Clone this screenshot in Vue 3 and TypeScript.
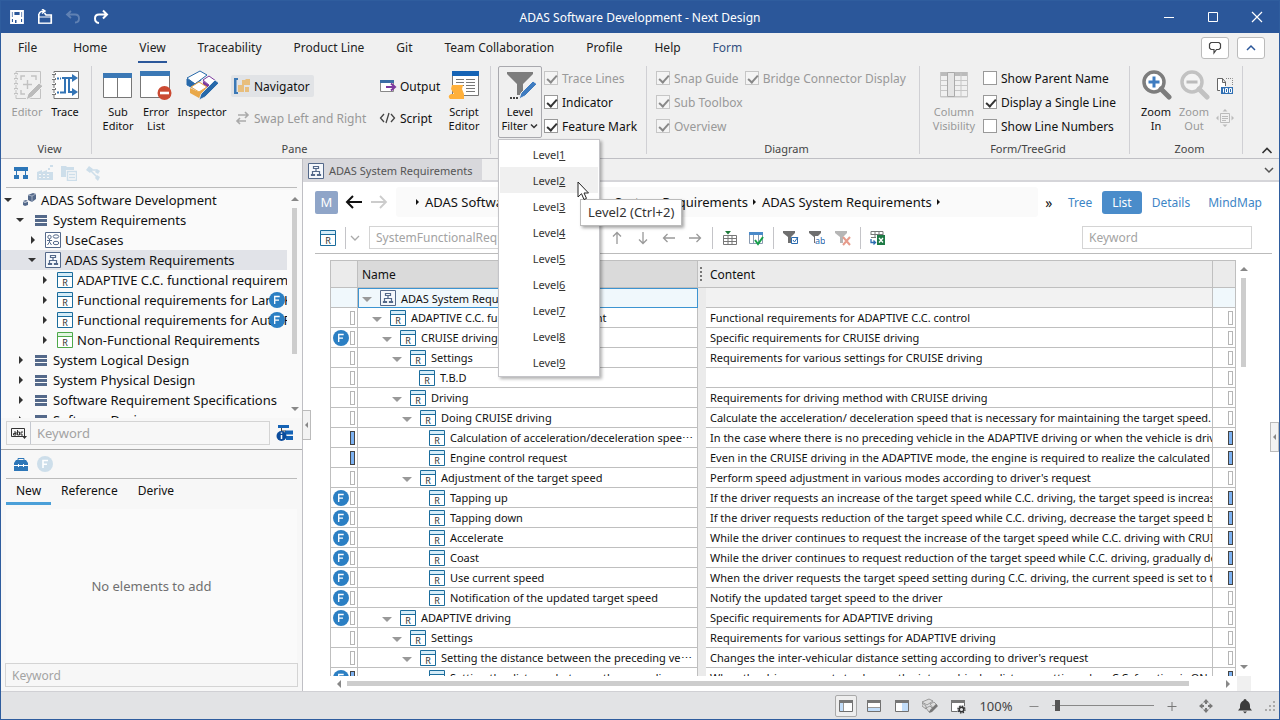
<script setup lang="ts">
import { ref } from 'vue'

interface TreeNode {
  label: string
  level: number
  icon: string
  open: boolean
  selected?: boolean
  feature?: boolean
}

interface GridRow {
  name: string
  content: string
  level: number
  expandable?: boolean
  feature?: boolean
  left?: 'off' | 'on'
  right?: 'off' | 'on'
}

const tabs = ['File', 'Home', 'View', 'Traceability', 'Product Line', 'Git', 'Team Collaboration', 'Profile', 'Help', 'Form']
const levels = [1, 2, 3, 4, 5, 6, 7, 8, 9]
const zoom = ref(3)

const tree: TreeNode[] = [
  { label: 'ADAS Software Development', level: 0, icon: 'project', open: true },
  { label: 'System Requirements', level: 1, icon: 'pkg', open: true },
  { label: 'UseCases', level: 2, icon: 'usecase', open: false },
  { label: 'ADAS System Requirements', level: 2, icon: 'struct', open: true, selected: true },
  { label: 'ADAPTIVE C.C. functional requirement', level: 3, icon: 'req', open: false },
  { label: 'Functional requirements for Lane Keep', level: 3, icon: 'req', open: false, feature: true },
  { label: 'Functional requirements for Auto Parking', level: 3, icon: 'req', open: false, feature: true },
  { label: 'Non-Functional Requirements', level: 3, icon: 'reqgreen', open: false },
  { label: 'System Logical Design', level: 1, icon: 'pkg', open: false },
  { label: 'System Physical Design', level: 1, icon: 'pkg', open: false },
  { label: 'Software Requirement Specifications', level: 1, icon: 'pkg', open: false },
  { label: 'Software Design', level: 1, icon: 'pkg', open: false },
]

const rows: GridRow[] = [
  { name: 'ADAPTIVE C.C. functional requirement', content: 'Functional requirements for ADAPTIVE C.C. control', level: 1, expandable: true },
  { name: 'CRUISE driving', content: 'Specific requirements for CRUISE driving', level: 2, expandable: true, feature: true },
  { name: 'Settings', content: 'Requirements for various settings for CRUISE driving', level: 3, expandable: true },
  { name: 'T.B.D', content: '', level: 5 },
  { name: 'Driving', content: 'Requirements for driving method with CRUISE driving', level: 3, expandable: true },
  { name: 'Doing CRUISE driving', content: 'Calculate the acceleration/ deceleration speed that is necessary for maintaining the target speed.', level: 4, expandable: true },
  { name: 'Calculation of acceleration/deceleration spee⋯', content: 'In the case where there is no preceding vehicle in the ADAPTIVE driving or when the vehicle is driving', level: 6, left: 'on', right: 'on' },
  { name: 'Engine control request', content: 'Even in the CRUISE driving in the ADAPTIVE mode, the engine is required to realize the calculated speed', level: 6, left: 'on', right: 'on' },
  { name: 'Adjustment of the target speed', content: "Perform speed adjustment in various modes according to driver's request", level: 4, expandable: true },
  { name: 'Tapping up', content: 'If the driver requests an increase of the target speed while C.C. driving, the target speed is increased', level: 6, feature: true, right: 'on' },
  { name: 'Tapping down', content: 'If the driver requests reduction of the target speed while C.C. driving, decrease the target speed by', level: 6, feature: true, right: 'on' },
  { name: 'Accelerate', content: 'While the driver continues to request the increase of the target speed while C.C. driving with CRUISE', level: 6, feature: true, right: 'on' },
  { name: 'Coast', content: 'While the driver continues to request reduction of the target speed while C.C. driving, gradually decrease', level: 6, feature: true, right: 'on' },
  { name: 'Use current speed', content: 'When the driver requests the target speed setting during C.C. driving, the current speed is set to the', level: 6, feature: true, right: 'on' },
  { name: 'Notification of the updated target speed', content: 'Notify the updated target speed to the driver', level: 6, feature: true },
  { name: 'ADAPTIVE driving', content: 'Specific requirements for ADAPTIVE driving', level: 2, expandable: true, feature: true },
  { name: 'Settings', content: 'Requirements for various settings for ADAPTIVE driving', level: 3, expandable: true },
  { name: 'Setting the distance between the preceding ve⋯', content: "Changes the inter-vehicular distance setting according to driver's request", level: 4, expandable: true },
  { name: 'Setting the distance between the preceding ve⋯', content: 'When the driver requests to change the inter-vehicular distance setting when C.C. function is ON', level: 6, feature: true, left: 'on', right: 'on' },
]

// Leaf rows have no expander, so their icon starts one slot further in.
const indent = (row: GridRow) => (row.expandable ? row.level : row.level - 1) * 10 + (row.expandable ? 4 : 21)
</script>

<template>
  <div class="app">
    <svg class="sprite" aria-hidden="true">
      <symbol id="req" viewBox="0 0 16 16"><path d="M.5.5h15v15H.5z" fill="#fff" stroke="#1a6c9c" /><path d="M1 1h14v3H1z" fill="#d5ecf8" /><path d="M1 4.500h14" stroke="#1a6c9c" /><text x="8" y="14" text-anchor="middle" font-size="9" font-family="Noto Sans, sans-serif" fill="#333">R</text></symbol>
      <symbol id="reqgreen" viewBox="0 0 16 16"><path d="M.5.5h15v15H.5z" fill="#fff" stroke="#4da84a" /><path d="M1 1h14v3H1z" fill="#e2f6e0" /><path d="M1 4.500h14" stroke="#4da84a" /><text x="8" y="14" text-anchor="middle" font-size="9" font-family="Noto Sans, sans-serif" fill="#333">R</text></symbol>
      <symbol id="struct" viewBox="0 0 16 16"><path d="M.5.5h15v15H.5z" fill="#f5f8fc" stroke="#54698a" /><path d="M5.500 3.500h5v2h-5zM3.500 11.500h3v1h-3zM9.500 11.500h3v1h-3zM8 6v2M4.500 11V8.500h7V11" fill="none" stroke="#54698a" stroke-width="1.200" /></symbol>
      <symbol id="usecase" viewBox="0 0 16 16"><path d="M.5.5h15v15H.5z" fill="#fff" stroke="#54698a" /><g fill="none" stroke="#54698a"><circle cx="4.500" cy="5" r="1.700" /><path d="M4.500 7v3M2 8.500h5M2.500 13l2-3 2 3" /><ellipse cx="11" cy="4.500" rx="2.800" ry="1.700" /><ellipse cx="11" cy="11" rx="2.800" ry="1.700" /></g></symbol>
      <symbol id="pkg" viewBox="0 0 16 16"><path d="M2 3h12v3H2zM2 7h12v3H2zM2 11h12v3H2z" fill="#54698a" /></symbol>
      <symbol id="project" viewBox="0 0 16 16"><path d="M7 3l5-2 3 1v5l-4 3-4-2z" fill="#54698a" /><path d="M7 3l4 1 4-2M11 4v6" stroke="#b6c0d0" fill="none" stroke-width=".8" /><path d="M2 9l3-1 2 1v4l-3 1-2-1z" fill="#54698a" /><path d="M2 9.500l2 .8 3-1" stroke="#dce2ea" fill="none" /></symbol>
      <symbol id="feat" viewBox="0 0 16 16"><circle cx="8" cy="8" r="8" fill="#2b7fc3" /><path d="M5.700 12V4.500h5M5.700 8.200h4.300" fill="none" stroke="#fff" stroke-width="1.300" /></symbol>
      <symbol id="panelwin" viewBox="0 0 16 16"><path d="M1.500 2.500h13v11h-13z" fill="#fff" stroke="#707070" /><path d="M1 2h14v3H1z" fill="#777" /></symbol>
      <symbol id="funnel" viewBox="0 0 16 16"><path d="M0 1h12v2L8 7v6H5V7L0 3z" fill="#6f6f6f" /></symbol>
    </svg>

    <header class="title">
      <div class="quick">
        <button aria-label="Save"><svg viewBox="0 0 16 16"><path d="M2 2h12v12H2zM2 9h12M4.500 2v5h7V2" fill="none" stroke="#fff" stroke-width="1.800" /><path d="M4 10h8v4H4z" fill="#fff" /><path d="M6 11h1.500v3H6z" fill="#2b579a" /></svg></button>
        <button aria-label="Open"><svg viewBox="0 0 16 16"><path d="M1.800 5v9h12.500V6H9L7.500 4" fill="none" stroke="#fff" stroke-width="1.600" /><path d="M2 8h12v6H2z" fill="#2b579a" stroke="#fff" stroke-width="1.200" /><path d="M2 5q1-3 5-3M5 0l3 2-3 2.500" stroke="#fff" stroke-width="1.500" fill="none" /></svg></button>
        <button aria-label="Undo" class="undo"><svg viewBox="0 0 16 16"><path d="M6 2L2 5.500 6 9M2 5.500h8q4 0 4 4t-4 4" fill="none" stroke="#fff" stroke-width="1.800" /></svg></button>
        <button aria-label="Redo"><svg viewBox="0 0 16 16"><path d="M10 1.500L14 5.500 10 9.500M14 5.500H6q-4 0-4 4t4 4.500" fill="none" stroke="#fff" stroke-width="2" /></svg></button>
      </div>
      <h1>ADAS Software Development - Next Design</h1>
      <div class="winbtns">
        <button aria-label="Minimize"><svg viewBox="0 0 12 12"><path d="M1 6.500h10" stroke="#fff" /></svg></button>
        <button aria-label="Maximize"><svg viewBox="0 0 12 12"><path d="M1.500 1.500h9v9h-9z" fill="none" stroke="#fff" /></svg></button>
        <button aria-label="Close"><svg viewBox="0 0 12 12"><path d="M1 1l10 10M11 1L1 11" stroke="#fff" stroke-width="1.200" /></svg></button>
      </div>
    </header>

    <nav class="tabs">
      <button v-for="t in tabs" :key="t" :class="{ file: t === 'File', active: t === 'View', context: t === 'Form' }">{{ t }}</button>
      <div class="tabtools">
        <button aria-label="Feedback"><svg viewBox="0 0 14 14"><path d="M3 1.500h8l1.500 1.500v4L11 8.500H8.500L6 12V8.500H3L1.500 7V3z" fill="#fff" stroke="#444" stroke-width="1.200" /></svg></button>
        <button aria-label="Collapse"><svg viewBox="0 0 14 14"><path d="M3 9l4-4 4 4" fill="none" stroke="#2b579a" stroke-width="1.500" /></svg></button>
      </div>
    </nav>

    <section class="ribbon">
      <div class="group g-view">
        <div class="items">
          <button class="big dim w38"><svg viewBox="0 0 32 32"><g fill="none" stroke="#c2c2c2"><path d="M5 3.500h24.500v27H5V3.500" /><path d="M5 5v25" stroke-dasharray="2 3" stroke-width="4" /><path d="M5 6v24" stroke="#f0f0f0" stroke-dasharray="1 4" stroke-width="3" /><path d="M10 12V8h4M20 8h5v4M10 22v4h4M12 16.500h9M16.500 12v9" stroke-width="1.400" /></g><path d="M15 32l2-6L28 15l4 3-11 11z" fill="#bbb" stroke="#f0f0f0" /></svg><span>Editor</span></button>
          <button class="big w38"><svg viewBox="0 0 32 32"><path d="M5 3.500h24.500v27H5z" fill="#fff" stroke="#777" /><path d="M5 5v25" stroke="#777" stroke-dasharray="2 3" stroke-width="4" /><path d="M4.500 5v25" stroke="#fff" stroke-dasharray="1 4" stroke-width="3" /><path d="M8 10.500h4M8 24.500h4" stroke="#3374b5" stroke-width="2" stroke-dasharray="2 1" /><path d="M12 24.500h4V10h11M13 10h7v14h7" fill="none" stroke="#3374b5" stroke-width="2" /><path d="M23 6l6 4-6 4zM23 20l6 4-6 4z" fill="#3374b5" /></svg><span>Trace</span></button>
        </div>
        <p>View</p>
      </div>

      <div class="group g-pane">
        <div class="items">
          <button class="big w38"><svg viewBox="0 0 32 32"><path d="M1.500 5.500h28v24h-28zM15.500 8v21" fill="#fff" stroke="#777" /><path d="M1 5h29v5H1z" fill="#3b78b5" /></svg><span>Sub<br>Editor</span></button>
          <button class="big w38"><svg viewBox="0 0 32 32"><path d="M.5 3.500h29v26H.5z" fill="#fff" stroke="#777" /><path d="M0 3h30v5H0z" fill="#3b78b5" /><circle cx="24.500" cy="25" r="7" fill="#cb4a32" /><path d="M20 25h9" stroke="#fff" stroke-width="2.600" /></svg><span>Error<br>List</span></button>
          <button class="big w54"><svg viewBox="0 0 32 32"><path d="M1 10L14 3l7 4-12 9z" fill="#fff" stroke="#2769aa" /><path d="M1 11v6l8 4v-5zM9 16l6-4" fill="#2769aa" stroke="#2769aa" /><path d="M17 12l6-4 7 5-6 5z" fill="#fff" stroke="#7c3a9e" /><path d="M17 13v5l6 4v-5z" fill="#7c3a9e" /><path d="M5 19l8-5 8 5-8 5z" fill="#fff" stroke="#e9a849" /><path d="M4 20v5l9 5v-6zM13 24l7-4v6l-7 4z" fill="#e9a849" /><path d="M13 32l2-6L29 12l4 3-14 14z" fill="#2769aa" stroke="#f0f0f0" stroke-width=".8" /></svg><span>Inspector</span></button>
          <div class="stack s-nav">
            <button class="line on"><svg viewBox="0 0 18 16"><path d="M1 0h4v2H3.500v12H5v2H1z" fill="#3b78b5" /><path d="M9 2h3l1-1h4v6H9zM5 7h4l1-1h1v8H5zM12 9h4v5h-4z" fill="#e8be7c" /></svg>Navigator</button>
            <button class="line dim"><svg viewBox="0 0 18 16"><path d="M5 5h10M12 2l3 3-3 3M13 11H4M7 8l-3 3 3 3" fill="none" stroke="#aaa" stroke-width="1.600" /></svg>Swap Left and Right</button>
          </div>
          <div class="stack s-out">
            <button class="line"><svg viewBox="0 0 18 16"><path d="M1.500 2.500h13v11h-13z" fill="#fff" stroke="#888" /><path d="M1 2h14v3H1z" fill="#3b6ea5" /><path d="M7 9h8M12 5.500l4 3.500-4 3.500" fill="none" stroke="#7c3a9e" stroke-width="2" /></svg>Output</button>
            <button class="line"><svg viewBox="0 0 18 16"><path d="M5 4L1.500 8 5 12M12 4l3.500 4L12 12M10 3L7 13" fill="none" stroke="#444" stroke-width="1.300" /></svg>Script</button>
          </div>
          <button class="big w38"><svg viewBox="0 0 32 32"><path d="M4.500 3.500h26v24h-26z" fill="#fff" stroke="#777" /><path d="M4 3h27v5H4z" fill="#1563b5" /><path d="M8 11.500h8M18 11.500h9M8 14.500h8M18 14.500h9M8 17.500h8M18 17.500h9M18 20.500h9M18 23.500h9" stroke="#777" /><path d="M4 17h11l-1 4 2 5v5H2q-3-3 1-5h3l-3-5z" fill="#ffb03b" /></svg><span>Script<br>Editor</span></button>
        </div>
        <p>Pane</p>
      </div>

      <div class="group g-filter">
        <div class="items">
          <div class="dropwrap">
            <button class="big filter"><svg viewBox="0 0 32 32"><path d="M3 4h26v2L19 16v11h-6V16L3 6z" fill="#7d7d7d" /><path d="M15 31l2-6L29 13l4 3-12 12z" fill="#3f7cc0" stroke="#f0f0f0" /><path d="M6 30h9" stroke="#444" stroke-width="2" stroke-dasharray="2 1" /></svg><span>Level<br>Filter <svg class="chev" viewBox="0 0 8 8"><path d="M1 2.500l3 3 3-3" fill="none" stroke="#333" stroke-width="1.500" /></svg></span></button>
            <div class="menu" role="menu">
              <button v-for="n in levels" :key="n" role="menuitem" :class="{ hover: n === 2 }">Level<u>{{ n }}</u></button>
              <svg class="cursor" viewBox="0 0 12 20"><path d="M1 1v15l3.500-3.300L7 18.500l2.500-1.100L7 12h4.500z" fill="#fff" stroke="#222" /></svg>
              <div class="tip" role="tooltip">Level2 (Ctrl+2)</div>
            </div>
          </div>
          <div class="checks">
            <label class="dim"><input type="checkbox" checked disabled>Trace Lines</label>
            <label><input type="checkbox" checked>Indicator</label>
            <label><input type="checkbox" checked>Feature Mark</label>
          </div>
        </div>
      </div>

      <div class="group g-diagram">
        <div class="items">
          <div class="checks">
            <div class="pair">
              <label class="dim"><input type="checkbox" checked disabled>Snap Guide</label>
              <label class="dim"><input type="checkbox" checked disabled>Bridge Connector Display</label>
            </div>
            <label class="dim"><input type="checkbox" checked disabled>Sub Toolbox</label>
            <label class="dim"><input type="checkbox" checked disabled>Overview</label>
          </div>
        </div>
        <p>Diagram</p>
      </div>

      <div class="group g-form">
        <div class="items">
          <button class="big dim w54"><svg viewBox="0 0 32 32"><path d="M2 4h28v4H2z" fill="#bbb" /><path d="M2.500 4v25h27V4M16 5v24M23 5v24M2 12.500h28M2 17.500h28M2 22.500h28M2 28.500h28" fill="none" stroke="#c6c6c6" /><path d="M9.500 4.500h7v24h-7z" fill="#e4e4e4" stroke="#aaa" /></svg><span>Column<br>Visibility</span></button>
          <div class="checks">
            <label><input type="checkbox">Show Parent Name</label>
            <label><input type="checkbox" checked>Display a Single Line</label>
            <label><input type="checkbox">Show Line Numbers</label>
          </div>
        </div>
        <p>Form/TreeGrid</p>
      </div>

      <div class="group g-zoom">
        <div class="items">
          <button class="big w38"><svg viewBox="0 0 32 32"><circle cx="14" cy="14" r="10" fill="#fff" stroke="#7d7d7d" stroke-width="3.500" /><path d="M21 21l8 8" stroke="#7d7d7d" stroke-width="5" stroke-linecap="round" /><path d="M8.500 14h11M14 8.500v11" stroke="#3f7cc0" stroke-width="3" /></svg><span>Zoom<br>In</span></button>
          <button class="big dim w38"><svg viewBox="0 0 32 32"><circle cx="14" cy="14" r="10" fill="#f4f4f4" stroke="#c2c2c2" stroke-width="3.500" /><path d="M21 21l8 8" stroke="#c2c2c2" stroke-width="5" stroke-linecap="round" /><path d="M8.500 14h11" stroke="#bbb" stroke-width="3" /></svg><span>Zoom<br>Out</span></button>
          <div class="stack s-zoom">
            <button aria-label="Zoom 100%"><svg viewBox="0 0 18 18"><path d="M4 13.500H1.500v-12h5L9.500 5v4M6.500 1.500v4h3" fill="#fff" stroke="#666" /><path d="M10 1.500h6.500V9" fill="none" stroke="#888" stroke-dasharray="1 1" /><path d="M5 10h12v7H5z" fill="#2f6fb3" /><path d="M7.500 11.500v4M9.500 11.500h2v4h-2zM13.500 11.500h2v4h-2z" fill="none" stroke="#fff" /></svg></button>
            <button aria-label="Fit"><svg viewBox="0 0 18 18"><path d="M4.500 4.500h9v9h-9zM6 7.500h6M6 9.500h6M6 11.500h4" fill="none" stroke="#bbb" /><path d="M9 0l2.500 2.500h-5zM9 18l2.500-2.500h-5zM0 9l2.500-2.500v5zM18 9l-2.500-2.500v5z" fill="#bbb" /></svg></button>
          </div>
        </div>
        <p>Zoom</p>
      </div>
      <button class="fold" aria-label="Collapse ribbon"><svg viewBox="0 0 12 12"><path d="M1.500 8L6 3.500 10.500 8" fill="none" stroke="#333" stroke-width="1.600" /></svg></button>
    </section>

    <div class="body">
      <aside class="side">
        <section class="navpane">
          <div class="sidetools">
            <button aria-label="Model"><svg viewBox="0 0 16 16"><path d="M1 2h14v4H1zM1 10h5v4H1zM10 10h5v4h-5z" fill="#2c76b8" /><path d="M3.500 6v4M12.500 6v4" stroke="#2c76b8" /></svg></button>
            <button aria-label="Product line"><svg viewBox="0 0 16 16"><path d="M0 15V7l5-2v2l5-2v2h6v8zM11 5V3h2v2zM13 2h3V0h-3z" fill="#cddeea" /><path d="M2 9.500h2M6 9.500h2M10 9.500h2M2 12.500h2M6 12.500h2M10 12.500h2" stroke="#f7f7f7" /></svg></button>
            <button aria-label="Documents"><svg viewBox="0 0 16 16"><path d="M0 1h5l1 1h7v3H5v7H0z" fill="#cddeea" /><path d="M6.500 6.500h9v9h-9zM8 9.500h6M8 12.500h6" fill="#f7f7f7" stroke="#cddeea" stroke-width="1.500" /></svg></button>
            <button aria-label="Relations"><svg viewBox="0 0 16 16"><path d="M4 1l4 3-3 4-4-3zM12 4l3 2-2 3-3-2zM12 10l3 2-2 4-3-3z" fill="#cddeea" /><path d="M6 5h6M6 6l6 6" stroke="#cddeea" stroke-width="1.500" /></svg></button>
          </div>
          <div class="treebox">
            <ul class="tree" role="tree">
              <li v-for="n in tree" :key="n.label" role="treeitem" :class="['lv' + n.level, { selected: n.selected }]">
                <i :class="n.open ? 'tri-down' : 'tri-right'"></i>
                <svg class="i16"><use :href="'#' + n.icon" /></svg>
                <span>{{ n.label }}</span>
                <svg v-if="n.feature" class="i16 badge"><use href="#feat" /></svg>
              </li>
            </ul>
            <div class="vbar"><i class="arr up"></i><b></b><i class="arr down"></i></div>
          </div>
          <div class="search">
            <div class="field">
              <button aria-label="Match mode"><svg viewBox="0 0 18 14"><path d="M1.500 2.500h13v8h-13z" fill="none" stroke="#333" /><path d="M4 6h2v3H3.500V7.500H6M7.500 4v5h2V6h-2M13 6h-2v3h2" fill="none" stroke="#333" /><path d="M12 10h5l-2.500 3z" fill="#333" /></svg></button>
              <input type="text" placeholder="Keyword" aria-label="Navigator keyword">
            </div>
            <button aria-label="Show details" class="info"><svg viewBox="0 0 18 18"><path d="M2 1h11v3H2zM9 6.500h8v4H9zM10 12h7v4h-7z" fill="#1563b5" /><path d="M5.500 4v3h4" fill="none" stroke="#444" /><circle cx="5.500" cy="12" r="5" fill="#0b4c9c" /><path d="M5.500 11v4M5.500 8.500v1.300" stroke="#fff" stroke-width="1.500" /></svg></button>
          </div>
        </section>

        <section class="toolbox">
          <div class="sidetools">
            <button aria-label="Toolbox"><svg viewBox="0 0 16 16"><path d="M1 7l2-3h10l2 3v8H1z" fill="#2c76b8" /><path d="M5 4V2.500h6V4" fill="none" stroke="#2c76b8" /><path d="M1 9.500h14M5.500 8v3M10.500 8v3" stroke="#fff" /></svg></button>
            <button aria-label="Features"><svg viewBox="0 0 16 16"><circle cx="8" cy="8" r="8" fill="#cddeea" /><path d="M6 12V4.500h5M6 8.200h4" fill="none" stroke="#fff" stroke-width="1.600" /></svg></button>
          </div>
          <div class="boxtabs">
            <button class="active">New</button><button>Reference</button><button>Derive</button>
          </div>
          <div class="empty">No elements to add</div>
          <input type="text" placeholder="Keyword" aria-label="Toolbox keyword">
        </section>
        <button class="handle hl" aria-label="Collapse navigator"></button>
      </aside>

      <main class="main">
        <div class="doctabs">
          <button><svg class="i16"><use href="#struct" /></svg>ADAS System Requirements</button>
          <svg class="more" viewBox="0 0 12 12"><path d="M2 4l4 4 4-4" fill="none" stroke="#555" stroke-width="1.500" /></svg>
        </div>

        <div class="crumbrow">
          <span class="model">M</span>
          <button class="hist" aria-label="Back"><svg viewBox="0 0 18 16"><path d="M17 8H2M8 2L2 8l6 6" fill="none" stroke="#111" stroke-width="2" /></svg></button>
          <button class="hist" aria-label="Forward"><svg viewBox="0 0 18 16"><path d="M1 8h14M10 2l6 6-6 6" fill="none" stroke="#ccc" stroke-width="1.800" /></svg></button>
          <div class="crumbs">
            <i></i><a href="#">ADAS Software Development</a><i></i><a href="#">System Requirements</a><i></i><a href="#">ADAS System Requirements</a><i></i>
          </div>
          <button class="overflow">»</button>
          <div class="views">
            <button>Tree</button><button class="active">List</button><button>Details</button><button>MindMap</button>
          </div>
        </div>

        <div class="toolrow">
          <svg class="i16 kind"><use href="#req" /></svg>
          <hr>
          <svg class="drop" viewBox="0 0 10 10"><path d="M1 3l4 4 4-4" fill="none" stroke="#aaa" stroke-width="1.300" /></svg>
          <input class="type" type="text" placeholder="SystemFunctionalRequirement" aria-label="Element type">
          <button aria-label="Up"><svg viewBox="0 0 16 16"><path d="M8 14V3M4 6.500L8 2.500l4 4" fill="none" stroke="#999" stroke-width="1.300" /></svg></button>
          <button aria-label="Down"><svg viewBox="0 0 16 16"><path d="M8 2v11M4 9.500l4 4 4-4" fill="none" stroke="#999" stroke-width="1.300" /></svg></button>
          <button aria-label="Left"><svg viewBox="0 0 16 16"><path d="M14 8H3M6.500 4l-4 4 4 4" fill="none" stroke="#999" stroke-width="1.300" /></svg></button>
          <button aria-label="Right"><svg viewBox="0 0 16 16"><path d="M2 8h11M9.500 4l4 4-4 4" fill="none" stroke="#999" stroke-width="1.300" /></svg></button>
          <hr>
          <button aria-label="Insert column"><svg viewBox="0 0 16 16"><path d="M1.500 5.500h13v9h-13zM1 8.500h14M1 11.500h14M6 6v9M10 6v9" fill="none" stroke="#777" /><path d="M3 1h6L6 4.500z" fill="#1e7a3a" /></svg></button>
          <button aria-label="Column settings"><svg viewBox="0 0 16 16"><path d="M1.500 2.500h13v11h-13zM5.500 5v9M10.500 5v9" fill="#fff" stroke="#8a9bb0" /><path d="M1 2h14v3H1z" fill="#4a8ac9" /><path d="M7 10l3 4 5-7" fill="none" stroke="#17a04a" stroke-width="2" /></svg></button>
          <hr>
          <button aria-label="Filter by check"><svg viewBox="0 0 16 16"><use href="#funnel" /><path d="M8.500 7.500h6v6h-6z" fill="#fff" stroke="#2b6cb0" /><path d="M10 10l1.500 2L15 7" fill="none" stroke="#2b6cb0" /></svg></button>
          <button aria-label="Filter by text"><svg viewBox="0 0 16 16"><use href="#funnel" /><path d="M6 6h10v9H6z" fill="#fff" /><text x="6" y="14" font-size="9" font-family="Noto Sans, sans-serif" fill="#2b6cb0">ab</text></svg></button>
          <button aria-label="Clear filter" class="faded"><svg viewBox="0 0 16 16"><use href="#funnel" /><path d="M8 7l7 8M15 7l-7 8" stroke="#d03a1a" stroke-width="2" /></svg></button>
          <hr>
          <button aria-label="Export to Excel" class="excel"><svg viewBox="0 0 16 16"><path d="M1 5V1.500h12V5M1 4.500h12M5 2v6M9 2v3M1 7.500h5" fill="none" stroke="#777" /><path d="M7 5h8v10H7z" fill="#1e7a45" /><path d="M9 8l4 4.500M13 8l-4 4.500" stroke="#fff" stroke-width="1.300" /><path d="M1 9v3.500h4M3.500 10.500l2 2-2 2" fill="none" stroke="#2b6cb0" stroke-width="1.300" /></svg></button>
          <input class="key" type="text" placeholder="Keyword" aria-label="List keyword">
        </div>

        <div class="gridwrap">
          <div class="gridclip">
            <div class="tablebox">
              <table>
                <colgroup><col class="c-mark"><col class="c-name"><col class="c-split"><col><col class="c-end"></colgroup>
                <thead>
                  <tr><th></th><th class="hname">Name</th><th class="split dots"><i></i></th><th>Content</th><th></th></tr>
                </thead>
                <tbody>
                  <tr class="root">
                    <td></td>
                    <td><div class="cell top"><i class="tri"></i><svg class="i16"><use href="#struct" /></svg><span>ADAS System Requirements</span></div></td>
                    <td class="split"></td><td></td><td></td>
                  </tr>
                  <tr v-for="(r, i) in rows" :key="i">
                    <td><div class="marks"><svg v-if="r.feature" class="i16"><use href="#feat" /></svg><b :class="{ on: r.left === 'on' }"></b></div></td>
                    <td><div class="cell" :style="{ paddingLeft: indent(r) + 'px' }"><i v-if="r.expandable" class="tri"></i><svg class="i16"><use href="#req" /></svg><span>{{ r.name }}</span></div></td>
                    <td class="split"></td>
                    <td class="content">{{ r.content }}</td>
                    <td><div class="marks"><b :class="{ on: r.right === 'on' }"></b></div></td>
                  </tr>
                </tbody>
              </table>
            </div>
            <div class="vbar"><i class="arr up"></i><b></b><i class="arr down"></i></div>
          </div>
          <div class="hbar"><i class="arr left"></i><b></b><i class="arr right"></i><em></em></div>
        </div>
        <button class="handle hr" aria-label="Expand inspector"></button>
      </main>
    </div>

    <footer class="status">
      <button class="on" aria-label="Navigator pane"><svg viewBox="0 0 16 16"><use href="#panelwin" /><path d="M2 5h3v8H2z" fill="#c3defa" /><path d="M5.500 5v8" stroke="#999" /></svg></button>
      <button aria-label="Bottom pane"><svg viewBox="0 0 16 16"><use href="#panelwin" /><path d="M2 10h12v3H2z" fill="#c3defa" /><path d="M2 9.500h12" stroke="#999" /></svg></button>
      <button aria-label="Right pane"><svg viewBox="0 0 16 16"><use href="#panelwin" /><path d="M8 5h6v8H8z" fill="#c3defa" /></svg></button>
      <button aria-label="Inspector"><svg viewBox="0 0 16 16"><path d="M0 4l7-3 4 2-6 4zM0 5v3l4 3V8zM8 6l4-2 3 3-4 3zM4 10l4-2 3 3-4 3z" fill="#ddd" stroke="#888" stroke-width=".8" /><path d="M7 15l1-3 6-6 2 2-6 6z" fill="#777" /></svg></button>
      <button aria-label="Pane settings"><svg viewBox="0 0 16 16"><use href="#panelwin" /><circle cx="11.500" cy="11.500" r="4.500" fill="#e2e3e5" /><circle cx="11.500" cy="11.500" r="2.300" fill="none" stroke="#333" stroke-width="1.500" /><circle cx="11.500" cy="11.500" r="3.500" fill="none" stroke="#333" stroke-width="1.300" stroke-dasharray="1.400 1.350" /></svg></button>
      <span class="pct">100%</span>
      <button aria-label="Zoom out"><svg viewBox="0 0 16 16"><path d="M3.500 8.500h9" stroke="#888" /></svg></button>
      <input v-model="zoom" type="range" min="0" max="100" aria-label="Zoom level">
      <button aria-label="Zoom in"><svg viewBox="0 0 16 16"><path d="M3.500 8.500h9M8 4v9" stroke="#777" /></svg></button>
      <button class="move" aria-label="Pan"><svg viewBox="0 0 16 16"><path d="M8 1l3 3.500H5zM8 15l3-3.500H5zM1 8l3.500-3v6zM15 8l-3.500-3v6z" fill="#777" /><path d="M8 4v2M8 10v2M4 8h2M10 8h2" stroke="#777" stroke-width="2" /></svg></button>
      <button class="bell" aria-label="Notifications"><svg viewBox="0 0 16 16"><path d="M8 1q1.500 0 1.500 1.500Q13 4 13 8v2l2 2.500H1L3 10V8q0-4 3.500-5.500Q6.500 1 8 1zM6 13.500h4L8 15.500z" fill="#3c3c3c" /></svg></button>
      <svg class="grip" viewBox="0 0 12 12"><path d="M9 1h2v2H9zM9 5h2v2H9zM5 5h2v2H5zM9 9h2v2H9zM5 9h2v2H5zM1 9h2v2H1z" fill="#aaa" /></svg>
    </footer>
  </div>
</template>

<style>
body { margin: 0; }
</style>

<style scoped>
.app {
  height: 100vh;
  min-height: 400px;
  box-sizing: border-box;
  display: flex;
  flex-direction: column;
  overflow: hidden;
  border: 1px solid #2f5d9e;
  background: #f0f0f0;
  color: #111;
  font-family: "Noto Sans", "Open Sans", sans-serif;
  font-size: 12px;
}
.app * { box-sizing: border-box; }
button, input { font: inherit; color: inherit; margin: 0; }
button { padding: 0; border: 0; background: none; display: flex; align-items: center; justify-content: center; white-space: nowrap; }
svg { display: block; flex: none; }
ul, p, h1 { margin: 0; padding: 0; }
.sprite { display: none; }
.i16 { width: 16px; height: 16px; }
.faded { opacity: .5; }
.undo { opacity: .25; }

.title { flex: none; height: 32px; display: flex; align-items: center; background: #2b579a; color: #fff; }
.quick, .winbtns { flex: 1; display: flex; }
.quick { gap: 12px; }
.quick button:first-child { margin-left: 8px; }
.quick svg { width: 16px; height: 16px; }
.title h1 { font-size: 12px; font-weight: 400; }
.winbtns { justify-content: flex-end; }
.winbtns button { width: 44px; height: 32px; }
.winbtns svg { width: 12px; height: 12px; }

.tabs { flex: none; height: 30px; display: flex; align-items: stretch; padding: 0 14px 0 16px; gap: 30px; }
.tabs > button { padding: 0 1px; border-bottom: 2px solid transparent; color: #222; }
.tabs > .file { margin-right: 4px; }
.tabs > .active { border-color: #2b579a; }
.tabs > .context { color: #35517f; }
.tabtools { margin-left: auto; display: flex; gap: 8px; align-items: center; }
.tabtools button { width: 28px; height: 22px; background: #fff; border: 1px solid #bbb; border-radius: 3px; }
.tabtools svg { width: 14px; height: 14px; }

.ribbon { flex: none; height: 96px; display: flex; border-bottom: 1px solid #bfbfc4; padding-top: 3px; }
.group { height: 88px; border-right: 1px solid #d0d0d4; display: flex; flex-direction: column; }
.items { flex: 1; display: flex; }
.group p { height: 12px; line-height: 14px; font-size: 11px; text-align: center; color: #444; }
.g-view { width: 91px; padding-left: 7px; }
.g-pane { width: 399px; padding-left: 7px; }
.g-filter { width: 156px; padding-left: 7px; }
.g-diagram { width: 273px; padding-left: 7px; }
.g-form { width: 210px; padding-left: 7px; }
.g-zoom { width: 113px; padding-left: 7px; }
.big { flex-direction: column; justify-content: flex-start; height: 72px; padding-top: 2px; font-size: 11px; line-height: 14px; }
.big > svg { width: 32px; height: 32px; margin-bottom: 5px; }
.dim { color: #999; }
.w38 { width: 38px; }
.w54 { width: 54px; }
.stack { display: flex; flex-direction: column; padding-top: 9px; gap: 10px; }
.stack .line { height: 22px; gap: 3px; padding: 0 4px 0 2px; align-self: flex-start; font-size: 12px; }
.line svg { width: 18px; height: 16px; }
.line.on { background: #e1e3e6; border-radius: 2px; }
.s-nav { width: 146px; margin-left: 2px; }
.s-out { width: 68px; }
.s-zoom button { height: 22px; width: 24px; }
.s-zoom svg { width: 18px; height: 18px; }
.checks { display: flex; flex-direction: column; margin-left: 2px; }
.checks label { height: 24px; display: flex; align-items: center; gap: 4px; font-size: 12px; white-space: nowrap; }
.pair { display: flex; gap: 6px; }
input[type="checkbox"] { appearance: none; width: 14px; height: 14px; border: 1px solid #999; background: #fff; position: relative; flex: none; }
input[type="checkbox"]:checked::after { content: ""; position: absolute; left: 4px; top: 1px; width: 4px; height: 8px; border: solid #333; border-width: 0 2px 2px 0; transform: rotate(42deg); }
input[type="checkbox"]:disabled { border-color: #c6c6c6; background: #f4f4f4; }
input[type="checkbox"]:disabled::after { border-color: #888; }
.dropwrap { position: relative; width: 44px; }
.filter { width: 44px; border: 1px solid #a9a9ae; border-radius: 2px; padding-top: 1px; }
.chev { display: inline-block; width: 8px; height: 8px; }
.menu { position: absolute; z-index: 5; left: 0; top: 73px; width: 102px; padding: 1px; background: #fff; border: 1px solid #c4c4c8; box-shadow: 2px 2px 3px rgba(0,0,0,.3); font-size: 11px; }
.menu button { width: 100%; height: 26px; color: #333; }
.menu .hover { background: #f0f0f0; }
.cursor { position: absolute; left: 78px; top: 41px; width: 12px; height: 20px; z-index: 2; }
.tip { position: absolute; left: 81px; top: 59px; height: 27px; padding: 0 7px; line-height: 24px; background: #fff; border: 1px solid #bbb; box-shadow: 2px 2px 3px rgba(0,0,0,.35); white-space: nowrap; font-size: 13px; color: #333; }
.fold { margin-left: auto; align-self: flex-end; margin-right: 5px; width: 14px; height: 14px; }
.fold svg { width: 12px; height: 12px; }

.body { flex: 1; min-height: 0; display: flex; }
.side { position: relative; flex: none; width: 302px; display: flex; flex-direction: column; border-right: 1px solid #bfbfc4; background: #f7f7f7; }
.navpane { flex: none; height: 291px; display: flex; flex-direction: column; border-bottom: 1px solid #a8a8a8; }
.sidetools { flex: none; height: 29px; margin: 0 5px; display: flex; align-items: center; gap: 8px; padding-left: 7px; border-bottom: 1px solid #bbb; }
.sidetools svg { width: 16px; height: 16px; }
.treebox { flex: 1; min-height: 0; margin-top: 2px; display: flex; overflow: hidden; background: #fafafa; }
.tree { flex: 1; min-width: 0; list-style: none; }
.tree li { position: relative; height: 20px; display: flex; align-items: center; overflow: hidden; white-space: nowrap; font-size: 13px; padding-left: 2px; }
.tree li span { margin-left: 4px; }
.tree .lv1 { padding-left: 14px; }
.tree .lv2 { padding-left: 26px; }
.tree .lv3 { padding-left: 38px; }
.tree .selected { background: #e1e3e8; }
.tree i { width: 12px; margin-right: 6px; flex: none; }
.tri-down::before { content: ""; display: block; width: 0; border: 4px solid transparent; border-top-color: #333; border-bottom-width: 0; margin-left: 1px; }
.tri-right::before { content: ""; display: block; width: 0; border: 4px solid transparent; border-left-color: #333; border-right-width: 0; margin-left: 4px; }
.badge { position: absolute; right: 2px; top: 2px; }
.vbar { flex: none; width: 15px; display: flex; flex-direction: column; align-items: center; }
.vbar b { width: 5px; background: #cdcdcd; }
.arr { width: 0; height: 0; border: 4px solid transparent; }
.up { border-bottom-color: #888; border-top-width: 0; }
.down { border-top-color: #888; border-bottom-width: 0; margin-top: auto; }
.left { border-right-color: #888; border-left-width: 0; }
.right { border-left-color: #888; border-right-width: 0; }
.treebox .vbar { padding: 7px 0 7px; }
.treebox .vbar b { height: 146px; margin-top: 7px; }
.search { flex: none; height: 31px; display: flex; align-items: center; padding: 0 5px 1px; gap: 6px; }
.field { width: 264px; height: 24px; display: flex; border: 1px solid #d4d4d4; }
.field button { width: 24px; border-right: 1px solid #c4c8d0; }
.field button svg { width: 18px; height: 14px; }
.field input { flex: 1; min-width: 0; border: 0; background: none; padding: 0 6px; font-size: 13px; }
.info svg { width: 18px; height: 18px; }
input::placeholder { color: #a3a3a3; opacity: 1; }
.toolbox { flex: 1; display: flex; flex-direction: column; min-height: 0; }
.boxtabs { flex: none; display: flex; height: 26px; margin-left: 5px; }
.boxtabs button { padding: 0 10px; border-bottom: 3px solid transparent; font-size: 12px; }
.boxtabs .active { border-color: #4a9fd8; }
.empty { flex: 1; display: flex; align-items: center; justify-content: center; margin: 4px 5px 0; background: #fafafa; color: #707070; font-size: 13px; }
.toolbox > input { height: 24px; margin: 0 4px 4px; padding: 0 6px; border: 1px solid #d4d4d4; background: #f7f7f7; font-size: 12px; }
.handle { position: absolute; z-index: 1; width: 9px; height: 30px; background: #f3f3f3; border: 1px solid #bbb; }
.handle::before { content: ""; border: 3px solid transparent; border-right-color: #888; border-left-width: 0; }
.hl { left: 301px; top: 251px; }
.hr { right: 0; top: 263px; }

.main { position: relative; flex: 1; min-width: 0; display: flex; flex-direction: column; background: #fff; }
.doctabs { flex: none; height: 23px; display: flex; justify-content: space-between; align-items: center; border-bottom: 2px solid #d5d5d9; background: #f0f0f0; padding-right: 4px; }
.doctabs button { height: 23px; margin-bottom: -2px; padding: 0 9px 0 5px; gap: 5px; background: #d8d8dc; color: #555; font-size: 11px; }
.more { width: 12px; height: 12px; }
.crumbrow { flex: none; height: 40px; display: flex; align-items: center; padding: 0 9px 0 12px; }
.model { width: 23px; height: 23px; border-radius: 2px; background: #8fa5c8; color: #fff; line-height: 23px; text-align: center; font-size: 13px; }
.hist { margin-left: 7px; }
.hist svg { width: 18px; height: 16px; }
.crumbs { flex: 1; min-width: 0; height: 30px; margin-left: 8px; padding-left: 20px; display: flex; align-items: center; background: #fafafa; border-radius: 3px; overflow: hidden; white-space: nowrap; font-size: 13px; }
.crumbs a { color: #111; text-decoration: none; margin: 0 5px 0 6px; }
.crumbs i { border: 3px solid transparent; border-left-color: #111; border-right-width: 0; }
.overflow { width: 22px; font-size: 14px; }
.views { display: flex; color: #3d85c6; font-size: 12px; gap: 2px; }
.views button { height: 23px; padding: 0 8px; border-radius: 3px; }
.views .active { background: #4a8cca; color: #fff; padding: 0 10px; }
.toolrow { flex: none; height: 32px; margin: 0 7px 0 12px; padding: 0 20px 0 5px; display: flex; align-items: center; border-bottom: 1px solid #bbb; }
.toolrow hr { width: 1px; height: 22px; margin: 0 4px; border: 0; background: #c4c4c8; }
.kind { margin-right: 5px; }
.toolrow .drop { width: 10px; height: 10px; margin-right: 9px; }
.toolrow input { height: 23px; border: 1px solid #d4d4d4; padding: 0 6px; }
.toolrow .type { width: 230px; margin-right: 5px; font-size: 12px; background: #fff; }
.toolrow .key { width: 170px; margin-left: auto; }
.toolrow button { width: 26px; height: 22px; }
.toolrow button > svg { width: 16px; height: 16px; }

.gridwrap { flex: 1; min-height: 0; margin: 6px 28px 0 27px; display: flex; flex-direction: column; }
.gridclip { flex: 1; min-height: 0; display: flex; overflow: hidden; }
.tablebox { flex: 1; min-width: 0; }
table { width: 100%; table-layout: fixed; border-collapse: separate; border-spacing: 0; border-left: 1px solid #bfbfbf; font-size: 11px; }
.c-mark { width: 27px; }
.c-name { width: 340px; }
.c-split { width: 8px; }
.c-end { width: 23px; }
th { height: 28px; padding: 0 4px; text-align: left; font-weight: 400; font-size: 12px; background: #ebebeb; border: solid #bfbfbf; border-width: 1px 1px 1px 0; }
th.hname { background: #dadada; }
td { height: 20px; padding: 0; border: solid #bfbfbf; border-width: 0 1px 1px 0; overflow: hidden; white-space: nowrap; line-height: 19px; }
.split { background: #ebebeb; padding: 0; border-width: 0; }
th.split { border-width: 1px 0; }
.dots i { display: block; width: 2px; height: 14px; margin: 0 0 0 2px; background: repeating-linear-gradient(#777 0 2px, transparent 2px 4px); }
.root td { background: #f0f8fc; }
.root td:nth-child(4) { background: #f2f2f2; }
.root td.split { background: #ebebeb; }
.root td:nth-child(2) { border-color: #3d94d1; }
.content { padding-left: 4px; }
.cell { height: 19px; display: flex; align-items: center; }
.cell span { margin-left: 5px; }
.cell.top { padding-left: 3px; border: solid #3d94d1; border-width: 1px 0 0 1px; }
.tri { border: 5px solid transparent; border-top-color: #999; border-bottom-width: 0; margin: 3px 8px 0 0; border-left-width: 5px; }
.marks { display: flex; align-items: center; justify-content: flex-end; height: 19px; padding-right: 2px; }
.marks b { width: 5px; height: 14px; margin-left: 1px; border: 1px solid #b5b5b5; }
.marks b.on { background: #7db2f2; border-color: #444; }
.gridclip .vbar { padding: 7px 0; width: 15px; }
.gridclip .vbar b { height: 89px; margin-top: 7px; }
.hbar { flex: none; height: 15px; display: flex; align-items: center; padding-left: 7px; }
.hbar b { flex: 1; height: 5px; margin: 0 37px 0 6px; background: #cdcdcd; }
.hbar em { width: 14px; height: 15px; margin-left: 7px; background: #f0f0f0; }

.status { flex: none; height: 28px; display: flex; align-items: center; justify-content: flex-end; border-top: 1px solid #d0d0d4; background: #e2e3e5; padding-right: 3px; gap: 6px; }
.status button { width: 22px; height: 22px; }
.status svg { width: 16px; height: 16px; }
.status .on { border: 1px solid #aaa; border-radius: 2px; background: #eee; }
.pct { font-size: 13px; width: 42px; text-align: center; color: #444; }
.status input { appearance: none; width: 102px; height: 14px; margin: 0 1px; background: linear-gradient(#888, #888) center / 100% 1px no-repeat; }
.status input::-webkit-slider-thumb { appearance: none; width: 5px; height: 11px; background: #555; }
.status .move { margin-left: 6px; }
.status .bell { margin-left: 11px; }
.status .grip { width: 12px; height: 12px; margin-left: 2px; }
</style>
